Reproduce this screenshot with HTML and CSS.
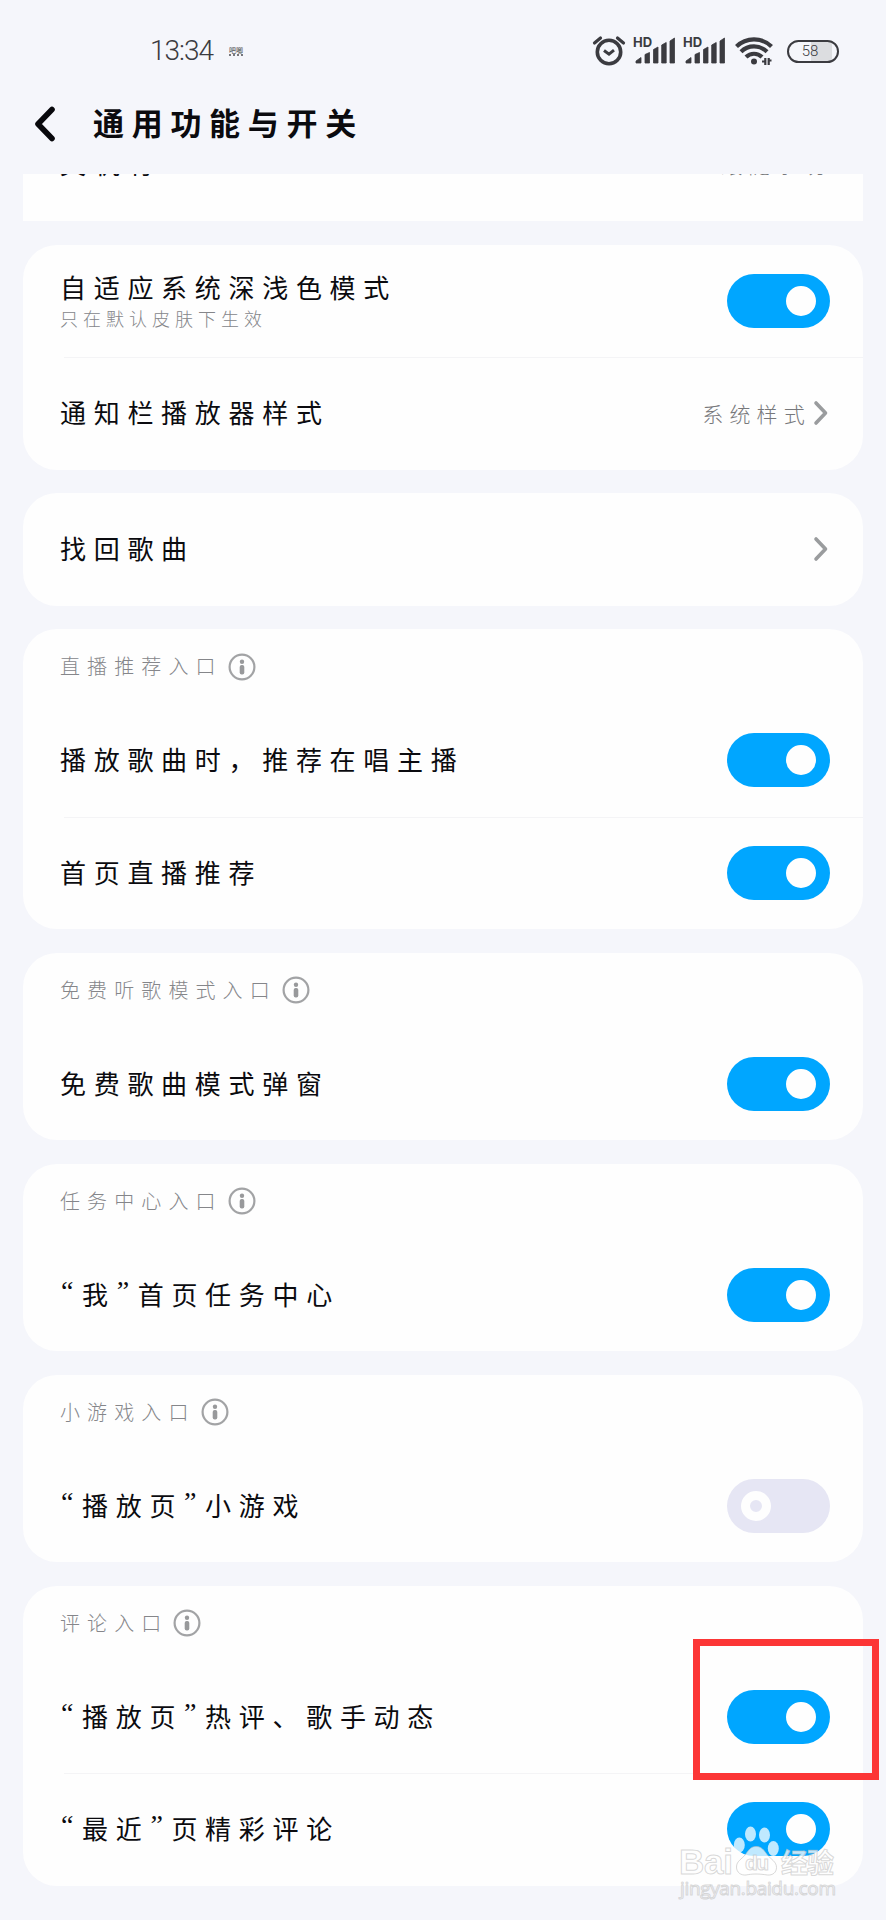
FILE: index.html
```html
<!DOCTYPE html>
<html lang="zh-CN">
<head>
  <meta charset="UTF-8">
  <meta name="viewport" content="width=device-width, initial-scale=1.0">
  <title>通用功能与开关</title>
  <link rel="stylesheet" href="styles.css">
</head>
<body>
  <svg class="symbols" width="0" height="0">
    <symbol id="info" viewBox="0 0 28 28">
      <circle cx="14" cy="14" r="12.4" fill="none" stroke="#a2a3a5" stroke-width="2.2"/>
      <circle cx="14" cy="8.8" r="2.2" fill="#98999b"/>
      <rect x="11.7" y="12" width="4.6" height="9.4" rx="2" fill="#98999b"/>
    </symbol>
    <symbol id="arrow" viewBox="0 0 16 26">
      <path d="M3 3l9.5 10L3 23" fill="none" stroke="#9a9c9e" stroke-width="3.6" stroke-linecap="round" stroke-linejoin="round"/>
    </symbol>
    <symbol id="signal" viewBox="0 0 42 30">
      <path d="M2 27v-2l5-3.5V27zM11 27V18.5l4.5-2V27zM19.5 27V13.5l4.5-2.5v16zM27.7 27V9l4.5-2.5V27zM36 27V5l4.5-3v25z" fill="#3b3b40" stroke="#3b3b40" stroke-width=".8" stroke-linejoin="round"/>
    </symbol>
  </svg>

  <header class="status-bar">
    <span class="time">13:34</span>
    <span class="notice"><i>吧唧</i></span>
    <div class="status-icons">
      <svg class="alarm" viewBox="0 0 34 32">
        <circle cx="17" cy="17" r="11.7" fill="none" stroke="#3b3b40" stroke-width="3.6"/>
        <path d="M12 15.5l5 3.7 5-4" fill="none" stroke="#3b3b40" stroke-width="3"/>
        <path d="M2.5 8l6-5M25.5 3l6 5" fill="none" stroke="#3b3b40" stroke-width="3.2" stroke-linecap="round"/>
      </svg>
      <div class="signal"><b>HD</b><svg viewBox="0 0 42 30"><use href="#signal"/></svg></div>
      <div class="signal"><b>HD</b><svg viewBox="0 0 42 30"><use href="#signal"/></svg></div>
      <svg class="wifi" viewBox="0 0 38 30">
        <g fill="none" stroke="#3b3b40" stroke-width="4.2">
          <path d="M1.5 10.5a25 25 0 0 1 35 0"/>
          <path d="M6 15.8a18.5 18.5 0 0 1 26 0"/>
          <path d="M11 21a11.5 11.5 0 0 1 16 0"/>
        </g>
        <circle cx="19" cy="25.5" r="3" fill="#3b3b40"/>
        <path d="M27 25.5h3.3V22M30.3 22v7M36.5 24.5h-2.8V29M33.7 22v6" fill="none" stroke="#3b3b40" stroke-width="2.2"/>
      </svg>
      <div class="battery">58</div>
    </div>
  </header>

  <div class="title-bar">
    <svg class="back" viewBox="0 0 22 36"><path d="M18 3.5L4 18l14 14.5" fill="none" stroke="#08080c" stroke-width="5.6" stroke-linecap="round" stroke-linejoin="round"/></svg>
    <h1>通用功能与开关</h1>
  </div>

  <main class="list">
    <section class="card card-cut">
      <div class="row"><span class="label">文机有</span><span class="value">跟随系统</span></div>
    </section>

    <section class="card">
      <div class="row">
        <div class="labels">
          <span class="label">自适应系统深浅色模式</span>
          <span class="sub">只在默认皮肤下生效</span>
        </div>
        <span class="toggle on"></span>
      </div>
      <div class="row line">
        <span class="label">通知栏播放器样式</span>
        <span class="value">系统样式</span>
        <svg class="arrow"><use href="#arrow"/></svg>
      </div>
    </section>

    <section class="card">
      <div class="row"><span class="label">找回歌曲</span><svg class="arrow"><use href="#arrow"/></svg></div>
    </section>

    <section class="card">
      <h2><span>直播推荐入口</span><svg class="info"><use href="#info"/></svg></h2>
      <div class="row"><span class="label">播放歌曲时，推荐在唱主播</span><span class="toggle on"></span></div>
      <div class="row line"><span class="label">首页直播推荐</span><span class="toggle on"></span></div>
    </section>

    <section class="card">
      <h2><span>免费听歌模式入口</span><svg class="info"><use href="#info"/></svg></h2>
      <div class="row"><span class="label">免费歌曲模式弹窗</span><span class="toggle on"></span></div>
    </section>

    <section class="card">
      <h2><span>任务中心入口</span><svg class="info"><use href="#info"/></svg></h2>
      <div class="row"><span class="label"><q>“</q>我<q>”</q>首页任务中心</span><span class="toggle on"></span></div>
    </section>

    <section class="card">
      <h2><span>小游戏入口</span><svg class="info"><use href="#info"/></svg></h2>
      <div class="row"><span class="label"><q>“</q>播放页<q>”</q>小游戏</span><span class="toggle"></span></div>
    </section>

    <section class="card">
      <h2><span>评论入口</span><svg class="info"><use href="#info"/></svg></h2>
      <div class="row marked"><span class="label"><q>“</q>播放页<q>”</q>热评、歌手动态</span><span class="toggle on"></span></div>
      <div class="row line"><span class="label"><q>“</q>最近<q>”</q>页精彩评论</span><span class="toggle on"></span></div>
    </section>
  </main>

  <svg class="watermark" viewBox="0 0 180 95">
    <g class="paw">
      <ellipse cx="69.3" cy="30" rx="5.5" ry="7.5"/>
      <ellipse cx="80.5" cy="19" rx="5.5" ry="7.5"/>
      <ellipse cx="94.5" cy="20" rx="5.5" ry="7.5"/>
      <ellipse cx="103.3" cy="33.5" rx="5.5" ry="7.5"/>
      <path d="M86 31.5c6 0 8 4 11 8 4 5 9.5 7 9.5 13 0 5-4 8-9 7.5-4-.5-7-1-11.500-1s-7 .5-10 1c-5 .5-9.500-2.500-9.500-8 0-6 5.500-8 9-12.500 3-4 5-8 10.500-8z"/>
    </g>
    <text class="wm-big" x="9" y="59" textLength="54">Bai</text>
    <text class="wm-du" x="75" y="55" textLength="24">du</text>
    <text class="wm-cn" x="111" y="58" textLength="53">经验</text>
    <text class="wm-url" x="10" y="80" textLength="156">jingyan.baidu.com</text>
  </svg>
</body>
</html>
```
FILE: styles.css
```css
*, *::before, *::after { margin: 0; padding: 0; box-sizing: border-box; }

body {
  width: 886px;
  height: 1920px;
  position: relative;
  overflow: hidden;
  background-color: #f5f6fb;
  color: #0b0b0f;
  font-family: "Noto Sans CJK SC", sans-serif;
}

.symbols { position: absolute; }

.status-bar {
  display: flex;
  align-items: center;
  height: 102px;
  padding: 0 47px 0 150px;
  color: #3b3b40;
}

.time {
  width: 66px;
  font: 300 28px/1 Roboto, sans-serif;
  letter-spacing: -1px;
  white-space: nowrap;
}

.notice { margin-left: 13px; font-size: 7px; line-height: 1; border-bottom: 2px dotted #77777c; }
.notice i { font-style: normal; }

.status-icons { display: flex; align-items: center; margin-left: auto; }
.alarm { width: 34px; height: 32px; }
.signal { position: relative; width: 42px; height: 30px; margin-left: 8px; }
.signal svg { display: block; width: 42px; height: 30px; }
.signal b { position: absolute; left: -1px; top: 0; font: bold 13px/13px Inter, sans-serif; }
.wifi { width: 38px; height: 30px; margin-left: 9px; }

.battery {
  width: 52px;
  height: 23px;
  margin-left: 14px;
  padding-right: 6px;
  border: 2px solid #3b3b40;
  border-radius: 12px;
  background: linear-gradient(90deg, #f5f6fb 45%, #dcdde0 45%, #dcdde0 90%, #f5f6fb 90%);
  font: 300 15px/19px Roboto, sans-serif;
  text-align: center;
}

.title-bar { display: flex; align-items: center; height: 72px; padding: 0 0 28px 34px; }
.back { width: 22px; height: 36px; }

h1 {
  margin: -4px 0 0 37px;
  font-size: 31px;
  font-weight: 700;
  line-height: 36px;
  letter-spacing: 7.7px;
}

.list { display: flex; flex-direction: column; gap: 23.5px; padding: 0 23px; }

.card { border-radius: 34px; background-color: #fefefe; }

/* scrolled under the title bar */
.card-cut {
  display: flex;
  flex-direction: column;
  justify-content: flex-end;
  height: 47px;
  border-radius: 0;
  overflow: hidden;
}
.card-cut .row { flex-shrink: 0; padding-bottom: 1px; }

h2 {
  display: flex;
  align-items: center;
  height: 75px;
  padding-left: 37px;
  color: #85868a;
  font-size: 20px;
  font-weight: 300;
  letter-spacing: 7.1px;
}
h2 span { margin-top: -2px; }
.info { width: 28px; height: 28px; margin-left: 5px; }

.row {
  display: flex;
  align-items: center;
  position: relative;
  height: 112.5px;
  padding: 0 33px 0 37px;
}

.line::before {
  content: "";
  position: absolute;
  left: 41px;
  right: 0;
  top: 0;
  border-top: 1px solid #f4f4f6;
}

.labels { display: flex; flex-direction: column; margin-top: -2px; }
.label {
  margin-top: -2px;
  margin-right: auto;
  font-size: 26px;
  font-weight: 400;
  line-height: 36px;
  letter-spacing: 7.7px;
  white-space: nowrap;
}
.labels .label { margin-top: 0; }
.labels + .toggle { margin-left: auto; }
.sub { color: #85868a; font-size: 18px; font-weight: 300; line-height: 26px; letter-spacing: 5px; }
.value { color: #77787b; font-size: 21px; font-weight: 300; letter-spacing: 6.2px; }
.arrow { width: 16px; height: 26px; margin: 0 1px 0 2px; }

q {
  display: inline-block;
  width: 22px;
  padding-left: 1px;
  font-family: "Liberation Serif", serif;
  font-size: 28px;
  letter-spacing: 0;
  line-height: 1;
  vertical-align: 5px;
}
q::before, q::after { content: none; }

.toggle {
  display: flex;
  align-items: center;
  width: 103px;
  height: 54px;
  padding: 0 14px;
  border-radius: 27px;
  background-color: #e6e6f4;
}
.toggle::after {
  content: "";
  width: 30px;
  height: 30px;
  border: 9.5px solid #fefefe;
  border-radius: 50%;
}
.toggle.on { justify-content: flex-end; background-color: #00a6ff; }
.toggle.on::after { background-color: #fefefe; }

.marked::after {
  content: "";
  position: absolute;
  right: -16px;
  top: -22px;
  width: 186px;
  height: 141px;
  border: 7px solid #fc3636;
  z-index: 1;
}

.watermark {
  position: absolute;
  left: 670px;
  top: 1815px;
  width: 180px;
  height: 95px;
  fill: rgba(255, 255, 255, 0.75);
  stroke: rgba(190, 190, 190, 0.6);
  stroke-width: 1px;
}
.paw ellipse { stroke: none; }
.wm-big { font: bold 35px "Liberation Sans", sans-serif; }
.wm-du { font: bold 21px "Liberation Sans", sans-serif; }
.wm-cn { font: bold 27px "Noto Sans CJK SC", sans-serif; }
.wm-url { font: 19px "Open Sans", sans-serif; }
```
